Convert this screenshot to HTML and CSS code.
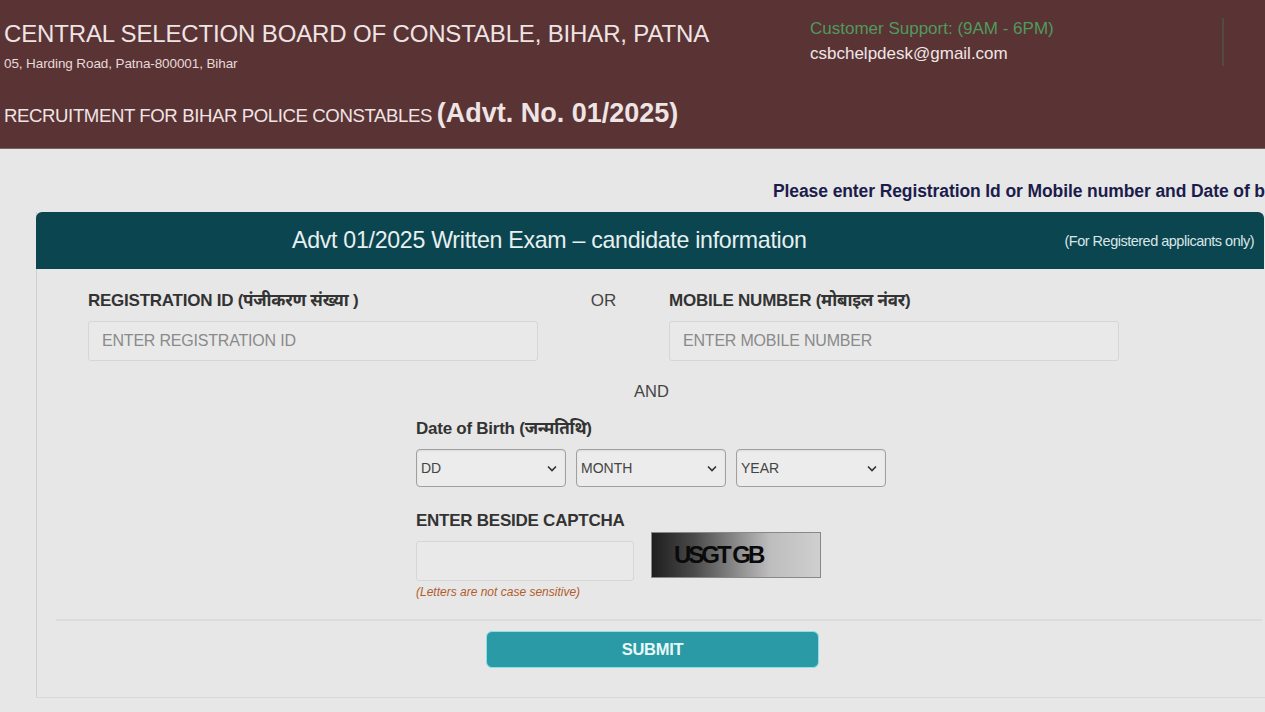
FILE: index.html
```html
<!DOCTYPE html>
<html lang="en">
<head>
<meta charset="utf-8">
<title>CSBC Bihar - Written Exam</title>
<link rel="stylesheet" href="styles.css">
</head>
<body>
<header class="topbar">
  <div class="brand">
    <h1 class="brand-title">CENTRAL SELECTION BOARD OF CONSTABLE, BIHAR, PATNA</h1>
    <p class="brand-addr">05, Harding Road, Patna-800001, Bihar</p>
    <p class="brand-recruit">RECRUITMENT FOR BIHAR POLICE CONSTABLES <b class="advt">(Advt. No. 01/2025)</b></p>
  </div>
  <div class="support">
    <p class="support-hours">Customer Support: (9AM - 6PM)</p>
    <p class="support-mail">csbchelpdesk@gmail.com</p>
  </div>
  <div class="divider"></div>
</header>

<main class="page">
  <p class="notice">Please enter Registration Id or Mobile number and Date of birth</p>
  <section class="card">
    <div class="card-head">
      <h2 class="card-title">Advt 01/2025 Written Exam – candidate information</h2>
      <span class="card-note">(For Registered applicants only)</span>
    </div>
    <div class="card-body">
      <div class="row-ids">
        <div class="field">
          <label class="lbl">REGISTRATION ID (पंजीकरण संख्या )</label>
          <input class="txt" type="text" placeholder="ENTER REGISTRATION ID">
        </div>
        <div class="or">OR</div>
        <div class="field">
          <label class="lbl">MOBILE NUMBER (मोबाइल नंवर)</label>
          <input class="txt" type="text" placeholder="ENTER MOBILE NUMBER">
        </div>
      </div>
      <div class="and">AND</div>
      <div class="dob">
        <label class="lbl">Date of Birth (जन्मतिथि)</label>
        <div class="selects">
          <div class="sel"><span>DD</span><svg viewBox="0 0 10 6" class="chev"><path d="M1 1l4 4 4-4" fill="none" stroke="#333" stroke-width="1.6"/></svg></div>
          <div class="sel"><span>MONTH</span><svg viewBox="0 0 10 6" class="chev"><path d="M1 1l4 4 4-4" fill="none" stroke="#333" stroke-width="1.6"/></svg></div>
          <div class="sel"><span>YEAR</span><svg viewBox="0 0 10 6" class="chev"><path d="M1 1l4 4 4-4" fill="none" stroke="#333" stroke-width="1.6"/></svg></div>
        </div>
        <label class="lbl cap-lbl">ENTER BESIDE CAPTCHA</label>
        <div class="cap-row">
          <div class="cap-col">
            <input class="txt cap-in" type="text">
            <p class="cap-note">(Letters are not case sensitive)</p>
          </div>
          <div class="captcha">USGT GB</div>
        </div>
      </div>
      <hr class="sep">
      <div class="actions"><button class="submit" type="button">SUBMIT</button></div>
    </div>
  </section>
</main>
</body>
</html>
```

FILE: styles.css
```css
* { box-sizing: border-box; }
html, body { margin: 0; padding: 0; }
body {
  background: #e7e7e7;
  font-family: "Liberation Sans", Arial, "Noto Sans Devanagari", "Noto Sans", sans-serif;
  color: #333;
  width: 1265px;
  height: 712px;
  overflow: hidden;
}
p { margin: 0; }

.topbar {
  background: #5a3334;
  height: 149px;
  display: flex;
  position: relative;
  border-bottom: 1px solid #7a6262;
}
.brand { padding: 20px 0 0 4px; width: 806px; }
.brand-title {
  margin: 0;
  font-weight: normal;
  font-size: 24px;
  letter-spacing: -0.15px;
  color: #efe4e4;
  line-height: 28px;
}
.brand-addr {
  font-size: 13.5px;
  color: #e6d9d9;
  margin-top: 8px;
  letter-spacing: -0.1px;
}
.brand-recruit {
  margin-top: 27px;
  font-size: 18.6px;
  color: #efe4e4;
  letter-spacing: -0.4px;
}
.advt { font-size: 27px; letter-spacing: 0; }
.support { padding-top: 18px; padding-left: 4px; }
.support-hours { color: #4f9a5d; font-size: 17px; line-height: 22px; }
.support-mail { color: #f0e6e6; font-size: 17px; line-height: 22px; margin-top: 3px; }
.divider {
  position: absolute;
  left: 1222px; top: 18px;
  width: 2px; height: 48px;
  background: #4f5a4c;
  opacity: .6;
}

.notice {
  height: 63px;
  padding: 32px 0 0 773px;
  white-space: nowrap;
  overflow: hidden;
  font-weight: bold;
  font-size: 17.5px;
  line-height: 20px;
  color: #1c1c4c;
  letter-spacing: -0.1px;
}
.card {
  margin-left: 36px;
  width: 1260px;
  border-left: 1px solid #d0d0d0;
  border-bottom: 1px solid #d8d8d8;
  height: 486px;
}
.card-head {
  background: #0b454f;
  height: 57px;
  border-top-left-radius: 6px;
  border-top-right-radius: 6px;
  display: flex;
  align-items: center;
  margin-left: -1px;
  width: 1228px;
}
.card-title {
  margin: 0;
  font-weight: normal;
  font-size: 23.2px;
  color: #e6f0f0;
  margin-left: 256px;
  letter-spacing: -0.3px;
}
.card-note {
  margin-left: auto;
  margin-right: 10px;
  font-size: 14.5px;
  color: #d8e6e8;
  letter-spacing: -0.5px;
}
.card-body { padding: 21px 0 0 51px; }
.row-ids { display: flex; align-items: flex-start; }
.field { display: flex; flex-direction: column; width: 450px; }
.lbl {
  font-weight: bold;
  font-size: 17px;
  color: #333;
  line-height: 22px;
  letter-spacing: -0.25px;
}
.txt {
  margin-top: 9px;
  height: 40px;
  width: 450px;
  background: #e9e9e9;
  border: 1px solid #d6d6d6;
  border-radius: 3px;
  padding: 0 13px;
  font-family: inherit;
  font-size: 16px;
}
.txt::placeholder { color: #8a8a8a; letter-spacing: -0.2px; }
.or { width: 131px; text-align: center; font-size: 17px; color: #444; line-height: 22px; }
.and { margin-left: 546px; margin-top: 19px; font-size: 16.5px; color: #444; line-height: 22px; }
.dob { margin-left: 328px; margin-top: 16px; }
.selects { display: flex; gap: 10px; margin-top: 9px; }
.sel {
  width: 150px; height: 38px;
  border: 1px solid #a0a0a0;
  border-radius: 4px;
  background: #ececec;
  display: flex; align-items: center; justify-content: space-between;
  padding: 0 8px 0 4px;
  font-size: 14px; color: #444;
  box-shadow: inset 0 1px 2px rgba(0,0,0,.08);
}
.chev { width: 10px; height: 7px; }
.cap-lbl { display: block; margin-top: 23px; }
.cap-row { display: flex; align-items: flex-start; }
.cap-col { display: flex; flex-direction: column; }
.cap-in { width: 218px; height: 40px; margin-top: 9px; }
.cap-note {
  font-style: italic;
  font-size: 12px;
  color: #b25c2e;
  margin-top: 4px;
}
.captcha {
  margin-left: 17px;
  width: 170px; height: 46px;
  border: 1px solid #888;
  background: linear-gradient(90deg, #1e1e1e 0%, #4a4a4a 25%, #bdbdbd 70%, #cfcfcf 100%);
  color: #0a0a0a;
  font-weight: bold;
  font-size: 24px;
  letter-spacing: -3px;
  padding-left: 22px;
  line-height: 44px;
}
.sep {
  margin: 20px 0 0 -32px;
  width: 1206px;
  border: 0;
  border-top: 2px solid #dcdcdc;
}
.actions { margin-left: 398px; margin-top: 10px; }
.submit {
  width: 333px; height: 37px;
  background: #2a9ba6;
  border: 1px solid #8fdfe6;
  border-radius: 6px;
  color: #e8f8f8;
  font-weight: bold;
  font-size: 16.5px;
  font-family: inherit;
  letter-spacing: -0.3px;
}
```
